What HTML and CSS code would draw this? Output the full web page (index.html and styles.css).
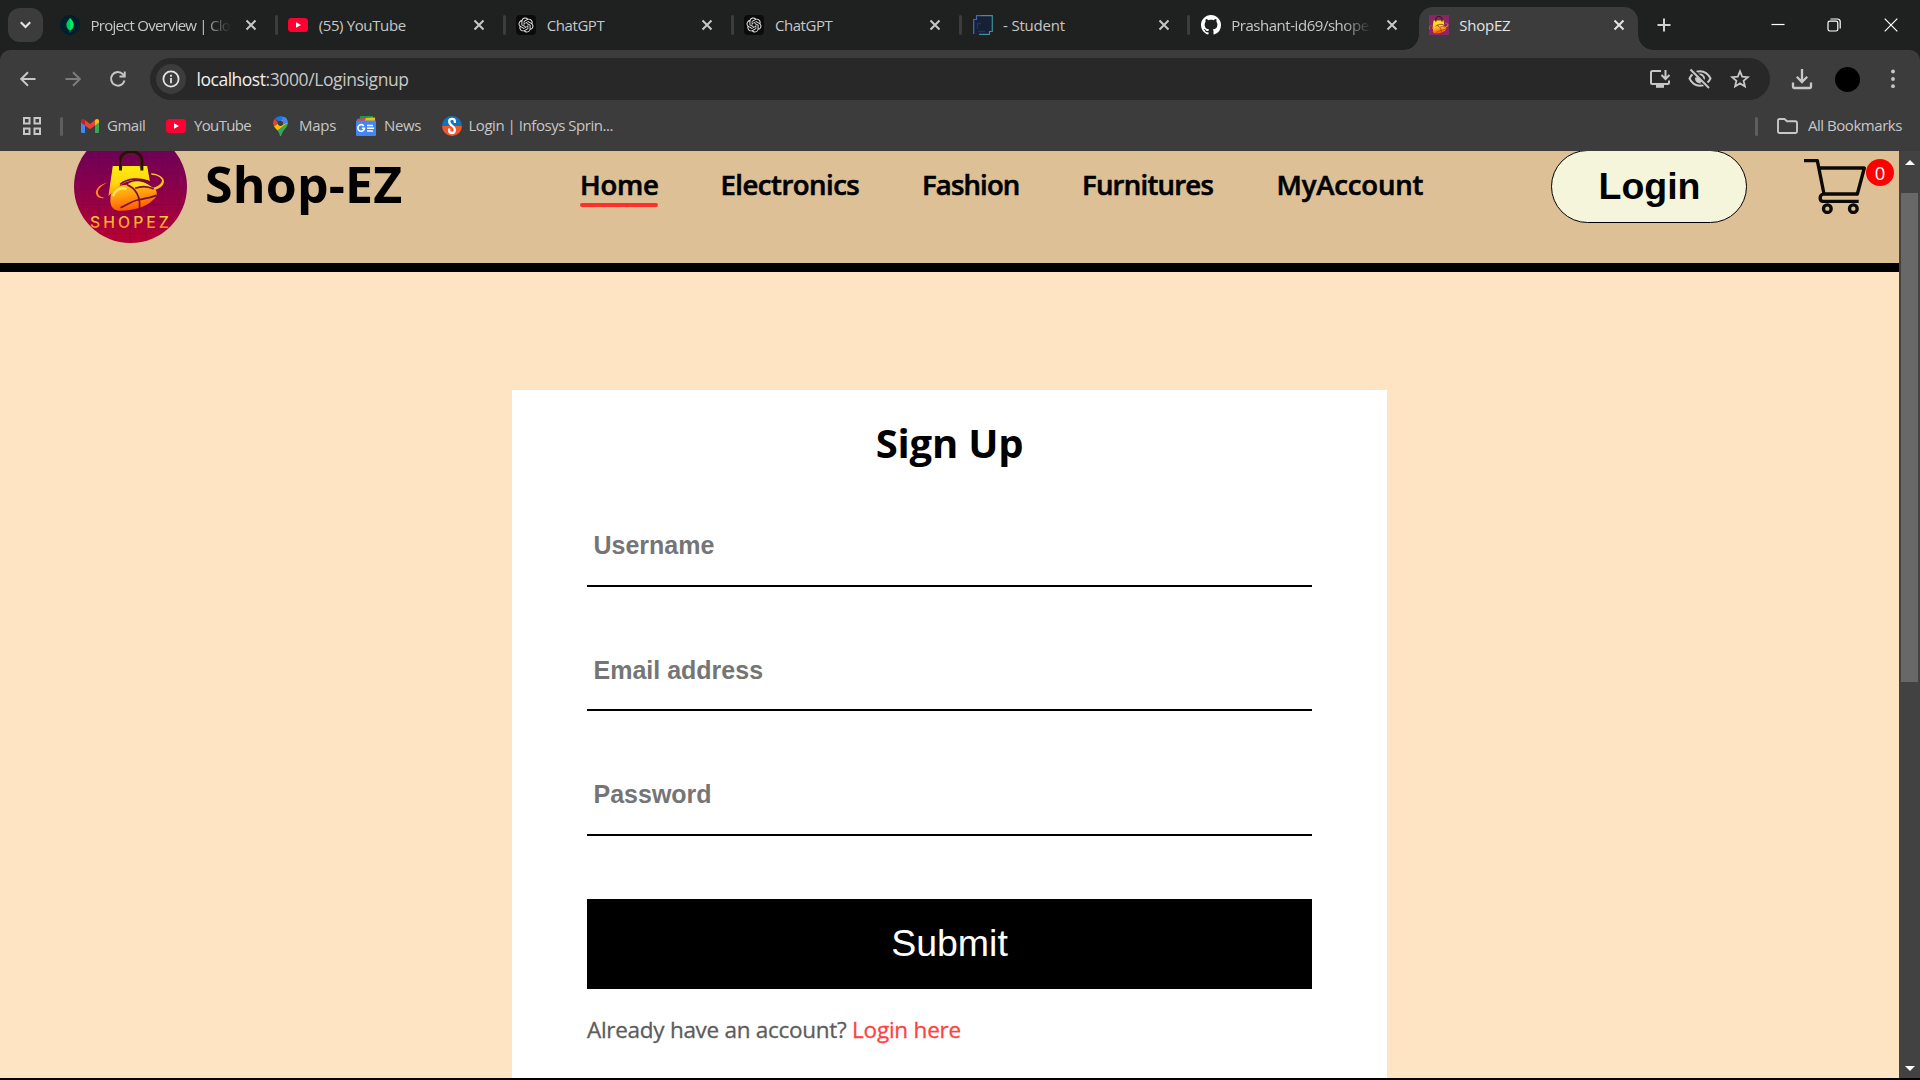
FILE: index.html
```html
<!DOCTYPE html>
<html lang="en">
<head>
<meta charset="utf-8">
<title>ShopEZ</title>
<link rel="stylesheet" href="styles.css">
</head>
<body>
<svg class="defs" width="0" height="0">
  <defs>
    <linearGradient id="wine" x1="0" y1="0" x2="0" y2="1"><stop offset="0" stop-color="#60005c"/><stop offset=".45" stop-color="#85004e"/><stop offset="1" stop-color="#b80032"/></linearGradient>
    <linearGradient id="bag" x1="0" y1="0" x2="0" y2="1"><stop offset="0" stop-color="#ffee10"/><stop offset=".6" stop-color="#ffd410"/><stop offset="1" stop-color="#ff9a08"/></linearGradient>
    <linearGradient id="mouse" x1="0" y1="0" x2=".25" y2="1"><stop offset="0" stop-color="#ffd51c"/><stop offset=".5" stop-color="#ffa310"/><stop offset="1" stop-color="#ff5a00"/></linearGradient>
    <linearGradient id="word" x1="0" y1="0" x2="0" y2="1"><stop offset=".2" stop-color="#ffcc30"/><stop offset=".9" stop-color="#ff7c18"/></linearGradient>
    <symbol id="x" viewBox="0 0 16 16"><path d="M3.500 3.500l9 9M12.500 3.500l-9 9" stroke="currentColor" stroke-width="2" fill="none"/></symbol>
    <symbol id="yt" viewBox="0 0 20 14"><rect width="20" height="14" rx="3.500" fill="#ff0033"/><path d="M8 4.200v5.600L13 7z" fill="#fff"/></symbol>
    <symbol id="gpt" viewBox="0 0 20 20"><rect width="20" height="20" rx="4" fill="#0b0b0b"/>
      <g transform="translate(2.500 2.500) scale(.625)"><path fill="#e6e6e6" d="M22.282 9.821a5.985 5.985 0 0 0-.516-4.910 6.046 6.046 0 0 0-6.510-2.900A6.065 6.065 0 0 0 4.981 4.182a5.985 5.985 0 0 0-3.998 2.900 6.046 6.046 0 0 0 .743 7.097 5.980 5.980 0 0 0 .510 4.911 6.051 6.051 0 0 0 6.515 2.900A5.985 5.985 0 0 0 13.260 24a6.056 6.056 0 0 0 5.772-4.206 5.990 5.990 0 0 0 3.998-2.900 6.056 6.056 0 0 0-.748-7.073zM13.260 22.430a4.476 4.476 0 0 1-2.876-1.040l.141-.081 4.779-2.758a.795.795 0 0 0 .393-.681v-6.737l2.020 1.169a.071.071 0 0 1 .038.052v5.583a4.504 4.504 0 0 1-4.495 4.493zM3.600 18.304a4.471 4.471 0 0 1-.535-3.014l.142.085 4.783 2.759a.771.771 0 0 0 .781 0l5.843-3.369v2.332a.080.080 0 0 1-.033.062L9.740 19.950a4.500 4.500 0 0 1-6.140-1.646zM2.340 7.896a4.485 4.485 0 0 1 2.366-1.973V11.600a.766.766 0 0 0 .388.676l5.815 3.355-2.020 1.168a.076.076 0 0 1-.071 0l-4.830-2.786A4.504 4.504 0 0 1 2.340 7.872zm16.597 3.855l-5.833-3.387L15.119 7.200a.076.076 0 0 1 .071 0l4.830 2.791a4.494 4.494 0 0 1-.676 8.105v-5.678a.790.790 0 0 0-.407-.667zm2.010-3.023l-.141-.085-4.774-2.782a.776.776 0 0 0-.785 0L9.409 9.230V6.897a.066.066 0 0 1 .028-.061l4.830-2.787a4.499 4.499 0 0 1 6.680 4.660zM8.307 12.863l-2.020-1.164a.080.080 0 0 1-.038-.057V6.075a4.499 4.499 0 0 1 7.375-3.453l-.142.080L8.704 5.460a.795.795 0 0 0-.393.681zm1.097-2.365l2.602-1.500 2.607 1.500v2.999l-2.597 1.500-2.607-1.500z"/></g></symbol>
    <g id="emblem">
      <path d="M324 127C300 133 284 148 288 162C291 173 302 176 314 174C298 172 292 163 294 154C297 142 311 133 324 127z" fill="#ff8a12"/>
      <path d="M452 100C474 101 492 112 491 125C490 138 476 146 463 150L458 144C474 139 485 131 485 121C483 111 469 105 454 104z" fill="#ffc61c"/>
      <path d="M338 78H441L449 124C420 112 381 121 360 136L325 168z" fill="url(#bag)"/>
      <path d="M361 92V62C361 26 425 26 425 62V92" fill="none" stroke="#2c1008" stroke-width="9"/>
      <path d="M365 84V62C369 36 415 36 420 62V84" fill="none" stroke="#53301a" stroke-width="2"/>
      <path d="M360 133C382 115 420 112 448 125" fill="none" stroke="#7c0a3a" stroke-width="5"/>
      <path d="M331 173C332 150 350 134 382 134C390 122 428 117 451 140L462 146C476 155 469 173 457 181C437 202 398 213 356 212C336 210 329 195 331 173z" fill="url(#mouse)"/>
      <path d="M387 133C402 122 428 121 451 139L460 144C438 138 419 140 406 143z" fill="#ffe01a"/>
      <path d="M340 166C345 150 360 143 376 146" fill="none" stroke="#ffe85c" stroke-width="7" stroke-linecap="round"/>
      <path d="M381 134C406 145 421 166 418 205M361 203C384 193 394 184 412 180C430 176 448 174 468 166M405 145C425 137 444 139 460 147" fill="none" stroke="#7c0a3a" stroke-width="5"/>
    </g>
  </defs>
</svg>
<div class="browser">
  <div class="tabstrip">
    <div class="tabsearch"><svg width="35" height="34" viewBox="0 0 35 34"><path d="M12.800 14.300l4.700 4.700 4.700-4.700" fill="none" stroke="#e3e3e3" stroke-width="2.200"/></svg></div>
    <div class="tabs">
      <div class="tab"><svg class="fav" viewBox="0 0 20 20"><circle cx="10" cy="10" r="10" fill="#001e2b"/><path d="M10 3C13 6 14 8.500 13.500 11C13 13.500 11.300 14.800 10.500 15.300L10.300 17.500H9.700L9.500 15.300C8.700 14.800 7 13.500 6.500 11C6 8.500 7 6 10 3z" fill="#00c95a"/><path d="M10 3C13 6 14 8.500 13.500 11C13 13.500 11.300 14.800 10.300 15.300z" fill="#00ed64"/></svg>
        <span class="title fade t-project">Project Overview | Clo</span><svg class="close"><use href="#x"/></svg><i class="sep"></i></div>
      <div class="tab"><svg class="fav yt"><use href="#yt"/></svg><span class="title t-yt">(55) YouTube</span><svg class="close"><use href="#x"/></svg><i class="sep"></i></div>
      <div class="tab"><svg class="fav"><use href="#gpt"/></svg><span class="title">ChatGPT</span><svg class="close"><use href="#x"/></svg><i class="sep"></i></div>
      <div class="tab"><svg class="fav"><use href="#gpt"/></svg><span class="title">ChatGPT</span><svg class="close"><use href="#x"/></svg><i class="sep"></i></div>
      <div class="tab"><svg class="fav" viewBox="0 0 20 20"><path d="M3.500 .7H19.300V16.500L16 19.300H.7V4.500H3.500z" fill="#172135"/><path d="M.7 19V4.500H3.500V.7H8" fill="none" stroke="#4169b8" stroke-width="1.200"/><path d="M8 .7H19.300V16.500H16.500V19.300H6" fill="none" stroke="#3f9096" stroke-width="1.200"/><path d="M4.500 14V8.500H8M5 16.500H12" fill="none" stroke="#1b3566" stroke-width="1.400"/></svg>
        <span class="title t-stu">- Student</span><svg class="close"><use href="#x"/></svg><i class="sep"></i></div>
      <div class="tab"><svg class="fav" viewBox="0 0 16 16"><path fill="#fff" d="M8 0C3.580 0 0 3.580 0 8c0 3.540 2.290 6.530 5.470 7.590.4.070.55-.17.55-.38 0-.19-.01-.82-.01-1.490-2.010.37-2.530-.49-2.690-.94-.09-.23-.48-.94-.82-1.130-.28-.15-.68-.52-.01-.53.63-.01 1.080.58 1.230.82.72 1.210 1.870.87 2.330.66.07-.52.28-.87.51-1.070-1.780-.2-3.640-.89-3.640-3.950 0-.87.31-1.590.82-2.150-.08-.2-.36-1.020.08-2.120 0 0 .67-.21 2.200.82.64-.18 1.320-.27 2-.27s1.360.09 2 .27c1.530-1.040 2.200-.82 2.200-.82.44 1.100.16 1.920.08 2.120.51.56.82 1.270.82 2.150 0 3.070-1.870 3.750-3.650 3.950.29.25.54.73.54 1.480 0 1.070-.01 1.930-.01 2.200 0 .21.15.46.55.38A8.013 8.013 0 0 0 16 8c0-4.420-3.580-8-8-8z"/></svg>
        <span class="title fade t-git">Prashant-id69/shopez</span><svg class="close"><use href="#x"/></svg></div>
      <div class="tab active"><svg class="fav" viewBox="0 0 20 20"><rect width="20" height="20" fill="#8a2568"/><use href="#emblem" transform="translate(-28 -2) scale(.0965)"/></svg>
        <span class="title t-shop">ShopEZ</span><svg class="close"><use href="#x"/></svg></div>
    </div>
    <svg class="newtab" viewBox="0 0 16 16"><path d="M8 1.500v13M1.500 8h13" stroke="#d0d0d0" stroke-width="2"/></svg>
    <div class="winbtns">
      <svg viewBox="0 0 14 14"><path d="M.5 6.500h13" stroke="#fff" stroke-width="1.200"/></svg>
      <svg viewBox="0 0 14 14"><rect x="1" y="3.200" width="9.800" height="9.800" rx="1.800" fill="none" stroke="#fff" stroke-width="1.200"/><path d="M3.500 1H10.500A2.600 2.600 0 0 1 13.200 3.600V10.500" fill="none" stroke="#fff" stroke-width="1.200"/></svg>
      <svg viewBox="0 0 14 14"><path d="M.7 .7l12.600 12.600M13.300 .7L.7 13.300" stroke="#fff" stroke-width="1.200"/></svg>
    </div>
  </div>
  <div class="chrome">
    <div class="toolbar">
      <svg class="nav-i" viewBox="0 0 20 20"><path d="M17.500 10H3.500M10 3.200L3.200 10l6.800 6.800" fill="none" stroke="#c7c7c7" stroke-width="2"/></svg>
      <svg class="nav-i" viewBox="0 0 20 20"><path d="M2.500 10h14M10 3.200l6.800 6.800-6.800 6.800" fill="none" stroke="#7c7c7c" stroke-width="2"/></svg>
      <svg class="nav-i" viewBox="0 0 20 20"><path d="M16.500 11.500A6.800 6.800 0 1 1 15 5.300L16.500 7" fill="none" stroke="#c7c7c7" stroke-width="2"/><path d="M17.700 2.500V8.500H11.500V6.600H15.800V2.500z" fill="#c7c7c7"/></svg>
      <div class="omnibox">
        <div class="info"><svg width="20" height="20" viewBox="0 0 20 20"><circle cx="10" cy="10" r="7.600" fill="none" stroke="#e3e3e3" stroke-width="1.800"/><path d="M10 9v5.200M10 5.700v2" stroke="#e3e3e3" stroke-width="1.800"/></svg></div>
        <span class="url"><b>localhost</b>:3000/Loginsignup</span>
        <svg class="o1" viewBox="0 0 22 20"><path d="M12 2H3.500Q2 2 2 3.500V13.500Q2 15 3.500 15H18.500Q20 15 20 13.500V11.500" fill="none" stroke="#c7c7c7" stroke-width="2"/><path d="M7 15.500H15V18.800H7z" fill="#c7c7c7"/><path d="M16.500 1v8M12.500 6l4 4 4-4" fill="none" stroke="#c7c7c7" stroke-width="2"/></svg>
        <svg class="o2" viewBox="0 0 24 22"><path d="M1.500 10.500C4 5.500 7.500 3.300 12 3.300S20 5.500 22.500 10.500C20 15.500 16.500 17.700 12 17.700S4 15.500 1.500 10.500z" fill="none" stroke="#c7c7c7" stroke-width="2"/><circle cx="12" cy="10.500" r="4" fill="none" stroke="#c7c7c7" stroke-width="2"/><path d="M4 2.500L21.500 20" stroke="#282828" stroke-width="5"/><path d="M2.500 1.500L21 20" stroke="#c7c7c7" stroke-width="2"/><path d="M9 8l5.500 5.500L12 14.500A4 4 0 0 1 8 10.500z" fill="#c7c7c7"/></svg>
        <svg class="o3" viewBox="0 0 20 20"><path d="M10 2.300l2.200 5.300 5.700.5-4.300 3.700 1.300 5.600L10 14.400l-4.900 3 1.300-5.600L2.100 8.100l5.700-.5z" fill="none" stroke="#c7c7c7" stroke-width="1.800"/></svg>
      </div>
      <svg class="dl" viewBox="0 0 22 22"><path d="M11 1v12.500M5.800 8.800L11 14l5.200-5.200" fill="none" stroke="#c7c7c7" stroke-width="2.300"/><path d="M2 14.500V18.500Q2 20 3.500 20H18.500Q20 20 20 18.500V14.500" fill="none" stroke="#c7c7c7" stroke-width="2.300"/></svg>
      <div class="avatar"></div>
      <svg class="dots" viewBox="0 0 6 20"><circle cx="3" cy="2.500" r="1.900"/><circle cx="3" cy="10" r="1.900"/><circle cx="3" cy="17.200" r="1.900"/></svg>
    </div>
    <div class="bookmarks">
      <svg class="apps" viewBox="0 0 18 18"><path d="M1 1h5.500v5.500H1zM11.500 1H17v5.500h-5.500zM1 11.500h5.500V17H1zM11.500 11.500H17V17h-5.500z" fill="none" stroke="#c7c7c7" stroke-width="2"/></svg>
      <i class="bsep"></i>
      <div class="bm bm-gmail"><svg viewBox="0 0 18 14"><path d="M0 2V12.700Q0 14 1.300 14H4V5z" fill="#4285f4"/><path d="M18 2V12.700Q18 14 16.700 14H14V5z" fill="#34a853"/><path d="M14 1.300V6.500L18 3.500V2C18 .2 16-.7 14.500 .6z" fill="#fbbc04"/><path d="M0 2C0 .2 2-.7 3.500 .6L4 1V6.500L0 3.500z" fill="#c5221f"/><path d="M4 1L9 5l5-4V6.500L9 10.300 4 6.500z" fill="#ea4335"/></svg><span>Gmail</span></div>
      <div class="bm bm-yt"><svg><use href="#yt"/></svg><span>YouTube</span></div>
      <div class="bm bm-maps"><svg viewBox="0 0 15 20"><path d="M7.500 0A7.300 7.300 0 0 0 2 2.500L7.500 7.300 12 1.500A7 7 0 0 0 7.500 0z" fill="#1a73e8"/><path d="M2 2.500A7.300 7.300 0 0 0 1 10.500L5 7z" fill="#ea4335"/><path d="M1 10.500L12.500 1.500Q15 4 14.700 8L4.500 14.500Q2 12 1 10.500z" fill="#fbbc04"/><path d="M4.500 14.500L14.700 6.500Q15 10 11.500 13.500 9 16 8 20H7Q6.500 17 4.500 14.500z" fill="#34a853"/><path d="M9 1L12.500 1.600Q15 4 14.500 6.500L9.500 9z" fill="#4285f4"/><circle cx="7.500" cy="7.300" r="2.600" fill="#3c3c3c"/></svg><span>Maps</span></div>
      <div class="bm bm-news"><svg viewBox="0 0 20 20"><path d="M4 0H17V7H3z" fill="#0c9d58"/><path d="M1 3L16 .8 17 7H1z" fill="#ea4335"/><path d="M10 2L19 1.500V7H8z" fill="#fbbc04"/><rect y="4.500" width="20" height="15.500" rx="1" fill="#4285f4"/><path d="M7.800 10A3.300 3.300 0 1 0 8.400 12.300H5.800" fill="none" stroke="#fff" stroke-width="1.600"/><path d="M11 9.500H17M11 12.200H18M11 15H17" stroke="#fff" stroke-width="1.500"/></svg><span>News</span></div>
      <div class="bm bm-info"><svg viewBox="0 0 20 20"><path d="M0 10A10 10 0 0 1 20 10z" fill="#0d75bb"/><path d="M0 10A10 10 0 0 0 20 10z" fill="#f0562b"/><path d="M12.800 7V5Q12.800 2.800 10 2.800T7.200 5.300Q7.200 7.800 10 9.600T12.800 14Q12.800 17 10 17T7.200 14.800V12.500" fill="none" stroke="#fff" stroke-width="2.300"/></svg><span>Login | Infosys Sprin...</span></div>
      <i class="bsep right"></i>
      <svg class="folder" viewBox="0 0 21 16"><path d="M1 13.500V2.500Q1 1 2.500 1H7.500L10 3.300H18.500Q20 3.300 20 4.800V13.500Q20 15 18.500 15H2.500Q1 15 1 13.500z" fill="none" stroke="#c7c7c7" stroke-width="1.900"/></svg>
      <span class="allbm">All Bookmarks</span>
    </div>
  </div>
  <div class="viewport">
    <div class="page">
      <header class="navbar">
        <svg class="logo" viewBox="222 -29.500 338 338"><defs><clipPath id="round"><circle cx="391" cy="139.500" r="169"/></clipPath></defs>
          <g clip-path="url(#round)"><rect x="222" y="-30" width="339" height="339" fill="url(#wine)"/>
          <path d="M250 0V309M297 0V309M344 0V309M391 0V309M438 0V309M485 0V309M532 0V309M222 54H561M222 100H561M222 147H561M222 193H561M222 240H561M222 280H561" stroke="#4c0040" stroke-opacity=".16" stroke-width="3"/>
          <use href="#emblem"/>
          <text x="270" y="265" class="wordmark" textLength="236" lengthAdjust="spacing">SHOPEZ</text></g></svg>
        <p class="brand">Shop-EZ</p>
        <ul class="menu">
          <li class="m1"><span>Home</span><hr></li>
          <li class="m2"><span>Electronics</span></li>
          <li class="m3"><span>Fashion</span></li>
          <li class="m4"><span>Furnitures</span></li>
          <li class="m5"><span>MyAccount</span></li>
        </ul>
        <button class="login">Login</button>
        <div class="cart">
          <svg viewBox="852 54 186 168" fill="none" stroke="#0c0a06" stroke-width="10"><path d="M852 62H892L912 162H1012L1033 84H897" stroke-linejoin="round"/><path d="M910 162C897 165 898 184 909 184H1016" /><circle cx="922" cy="206" r="11.500"/><circle cx="1000" cy="206" r="11.500"/></svg>
          <span class="count">0</span>
        </div>
      </header>
      <main class="signup">
        <div class="card">
          <h1>Sign Up</h1>
          <div class="fields">
            <input type="text" placeholder="Username">
            <input type="email" placeholder="Email address">
            <input type="password" placeholder="Password">
          </div>
          <button class="submit">Submit</button>
          <p class="switch">Already have an account? <span>Login here</span></p>
        </div>
      </main>
    </div>
    <div class="scrollbar"><i class="up"></i><div class="thumb"></div><i class="down"></i></div>
  </div>
</div>
</body>
</html>
```
FILE: styles.css
```css
* { box-sizing: border-box; }
body { margin: 0; background: #000; font-family: "Open Sans", "Noto Sans", sans-serif; overflow: hidden; }
p, h1, ul { margin: 0; padding: 0; }
svg { display: block; flex: none; }
.defs { position: absolute; }
.browser { width: 1920px; height: 1078px; display: flex; flex-direction: column; background: #1f2120; overflow: hidden; }

/* tab strip */
.tabstrip { height: 50px; flex: none; display: flex; align-items: flex-start; }
.tabsearch { margin: 8px 0 0 8px; width: 35px; height: 34px; border-radius: 12px; background: #3c3c3c; }
.tabs { display: flex; margin-left: 7px; }
.tab { width: 228.15px; height: 50px; padding-left: 10px; display: grid; grid-template-columns: 20px 142px 16px 3px; column-gap: 10.500px; align-items: center; color: #c7c7c7; }
.fav { width: 20px; height: 20px; }
.fav.yt { height: 14px; }
.title { font-size: 15px; line-height: 20px; letter-spacing: -.43px; white-space: nowrap; padding-bottom: .500px; }
.fade { width: 150px; mask-image: linear-gradient(90deg, #000 112px, transparent 140px); }
.t-project { letter-spacing: -.76px; }
.t-yt { letter-spacing: -.37px; }
.t-stu { letter-spacing: -.2px; }
.t-git { letter-spacing: -.46px; }
.t-shop { letter-spacing: -.26px; }
.close { width: 16px; height: 16px; }
.sep { width: 3px; height: 20px; border-radius: 2px; background: #3c3c3c; margin-left: 5px; }
.tab.active { width: 219px; height: 43px; margin-top: 7px; padding-bottom: 7px; background: #3c3c3c; border-radius: 14px 14px 0 0; color: #e3e3e3; position: relative; grid-template-columns: 20px 141.500px 16px; }
.tab.active::before, .tab.active::after { content: ""; position: absolute; bottom: 0; width: 15px; height: 15px; }
.tab.active::before { left: -15px; background: radial-gradient(circle at 0 0, transparent 14.500px, #3c3c3c 15px); }
.tab.active::after { right: -15px; background: radial-gradient(circle at 100% 0, transparent 14.500px, #3c3c3c 15px); }
.newtab { width: 16px; height: 16px; margin: 17px 0 0 17.800px; }
.winbtns { margin: 17.500px 22.500px 0 auto; display: flex; gap: 42.500px; }
.winbtns svg { width: 14px; height: 14px; }

/* toolbar */
.chrome { height: 101px; flex: none; background: #3c3c3c; border-radius: 10px 10px 0 0; }
.toolbar { height: 58px; display: flex; align-items: center; padding: 0 23px 0 18px; }
.nav-i { width: 20px; height: 20px; margin-right: 25px; }
.omnibox { width: 1620px; height: 42px; margin: 0 21px 0 -3px; border-radius: 21px; background: #282828; display: flex; align-items: center; padding: 0 20px 0 6px; }
.info { width: 30px; height: 30px; border-radius: 50%; background: #3c3c3c; display: grid; place-items: center; }
.url { flex: 1; margin-left: 10.500px; font-size: 17.500px; line-height: 24px; letter-spacing: -.39px; color: #c7c7c7; }
.url b { font-weight: 400; color: #f0f0f0; letter-spacing: -.48px; }
.o1 { width: 22px; height: 20px; margin-right: 17px; }
.o2 { width: 24px; height: 22px; margin-right: 18px; }
.o3 { width: 20px; height: 20px; }
.dl { width: 22px; height: 22px; }
.avatar { width: 25px; height: 25px; border-radius: 50%; background: #000; margin: 0 29.500px 0 22px; }
.dots { width: 6px; height: 20px; fill: #c7c7c7; }

/* bookmarks bar */
.bookmarks { height: 36px; display: flex; align-items: center; padding: 0 18px 0 23px; color: #c7c7c7; font-size: 15px; line-height: 20px; white-space: nowrap; }
.apps { width: 18px; height: 18px; }
.bsep { width: 3px; height: 19px; border-radius: 2px; background: #5e5e5e; margin: 0 18px 0 19px; }
.bsep.right { margin: 0 19px 0 auto; }
.bm { display: flex; align-items: center; }
.bm svg { height: 20px; width: 20px; }
.bm span, .allbm { padding-bottom: 2px; }
.bm-gmail { width: 85px; gap: 8px; letter-spacing: -.5px; }
.bm-gmail svg { width: 18px; height: 14px; }
.bm-yt { width: 107px; gap: 8px; letter-spacing: -.65px; }
.bm-yt svg { height: 14px; }
.bm-maps { width: 83px; gap: 11px; letter-spacing: -.25px; }
.bm-maps svg { width: 15px; }
.bm-news { width: 85.500px; gap: 8px; letter-spacing: -.35px; }
.bm-info { gap: 7px; letter-spacing: -.46px; }
.folder { width: 21px; height: 16px; margin-right: 10px; }
.allbm { letter-spacing: -.45px; }

/* page */
.viewport { flex: 1; min-height: 0; display: flex; overflow: hidden; }
.page { width: 1899px; overflow: hidden; background: #ffe4c4; display: flex; flex-direction: column; }
.navbar { height: 162px; flex: none; margin-top: -41px; border-bottom: 9px solid #000; background: #ddc095; display: flex; align-items: center; padding: 0 5px 0 74px; }
.logo { width: 113px; height: 113px; }
.wordmark { font: 500 47px "Inter", "Liberation Sans", sans-serif; fill: url(#word); }
.brand { width: 375px; margin-left: 18px; padding-bottom: 5px; font-size: 50px; line-height: 60px; font-weight: 700; letter-spacing: .2px; }
.menu { display: flex; gap: 62.500px; list-style: none; font-size: 27.500px; line-height: 28px; font-weight: 600; margin-top: 5px; color: #000; -webkit-text-stroke: .6px #000; }
.menu li { height: 36px; white-space: nowrap; }
.menu hr { margin: 4px 0 0; border: 0; height: 4px; border-radius: 3px; background: #ff2f2a; }
.m1 { width: 78px; letter-spacing: -.2px; }
.m2 { width: 139px; letter-spacing: -.5px; }
.m3 { width: 97.500px; letter-spacing: -.85px; }
.m4 { width: 132px; letter-spacing: -.75px; }
.m5 { width: 148px; letter-spacing: -.15px; }
.login { width: 196px; height: 73px; margin-left: auto; border: 1.250px solid #000; border-radius: 75px; background: #f5f5dc; font: 700 37.500px/40px "Liberation Sans", Arial, sans-serif; color: #000; padding: 0 0 1px 1px; }
.cart { display: flex; height: 73px; margin-left: 57px; }
.cart svg { width: 62px; height: 56px; margin-top: 8px; }
.count { width: 28px; height: 27px; margin-top: 9px; border-radius: 50%; background: #f00; color: #fff; font-size: 18.500px; line-height: 27px; text-align: center; }

/* sign-up form */
.signup { display: flex; justify-content: center; padding-top: 118px; }
.card { width: 875px; height: 760px; flex: none; background: #fff; padding: 26px 75px 0; }
.card h1 { font-size: 40px; line-height: 54px; font-weight: 700; letter-spacing: -.2px; text-align: center; color: #000; }
.fields { display: flex; flex-direction: column; gap: 34.500px; margin-top: 26.500px; }
.fields input { height: 90px; border: 0; border-bottom: 2px solid #000; outline: 0; padding: 10px 0 0 6.500px; background: #fff; font: 700 25px/30px "Liberation Sans", Arial, sans-serif; }
.fields input::placeholder { color: #757575; opacity: 1; }
.submit { display: block; width: 725px; height: 90px; margin-top: 63px; border: 0; border-radius: 0; padding: 0 0 2px; background: #000; color: #fff; font: 37.500px/44px "Liberation Sans", Arial, sans-serif; }
.switch { margin-top: 25px; font-size: 22.500px; line-height: 32px; font-weight: 500; letter-spacing: -.28px; color: #5c5c5c; white-space: nowrap; -webkit-text-stroke: .3px; }
.switch span { color: #ff4141; letter-spacing: -.22px; }

/* scrollbar */
.scrollbar { width: 21px; background: #424242; display: flex; flex-direction: column; align-items: center; padding: 9px 2px 7px; }
.up, .down { border: 5px solid transparent; height: 0; }
.up { border-top: 0; border-bottom-color: #fff; }
.down { border-bottom: 0; border-top-color: #fff; margin-top: auto; }
.thumb { width: 17px; height: 489px; background: #686868; margin-top: 28px; }
```
